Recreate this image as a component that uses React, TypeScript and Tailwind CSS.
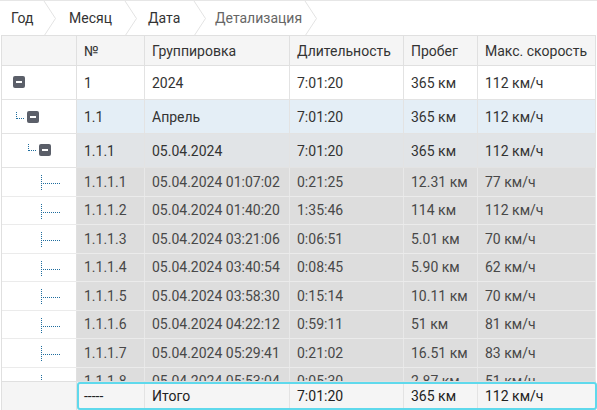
import React from "react";

type Row = { n: string; g: string; d: string; p: string; s: string };

const details: Row[] = [
  { n: "1.1.1.1", g: "05.04.2024 01:07:02", d: "0:21:25", p: "12.31 км", s: "77 км/ч" },
  { n: "1.1.1.2", g: "05.04.2024 01:40:20", d: "1:35:46", p: "114 км", s: "112 км/ч" },
  { n: "1.1.1.3", g: "05.04.2024 03:21:06", d: "0:06:51", p: "5.01 км", s: "70 км/ч" },
  { n: "1.1.1.4", g: "05.04.2024 03:40:54", d: "0:08:45", p: "5.90 км", s: "62 км/ч" },
  { n: "1.1.1.5", g: "05.04.2024 03:58:30", d: "0:15:14", p: "10.11 км", s: "70 км/ч" },
  { n: "1.1.1.6", g: "05.04.2024 04:22:12", d: "0:59:11", p: "51 км", s: "81 км/ч" },
  { n: "1.1.1.7", g: "05.04.2024 05:29:41", d: "0:21:02", p: "16.51 км", s: "83 км/ч" },
  { n: "1.1.1.8", g: "05.04.2024 05:53:04", d: "0:05:30", p: "2.87 км", s: "51 км/ч" },
];

const GRID = "grid grid-cols-[75px_68px_145px_114px_74px_118px]";

function Chevron() {
  return (
    <svg width="14" height="35" viewBox="0 0 14 35" className="shrink-0">
      <polyline points="1,0 12.5,17.5 1,35" fill="none" stroke="#e3e3e3" strokeWidth="1" />
    </svg>
  );
}

function MinusBox({ x, y }: { x: number; y: number }) {
  return (
    <g>
      <rect x={x} y={y} width="12" height="12" rx="2" fill="#5b5f69" />
      <rect x={x + 3} y={y + 5} width="6" height="2" fill="#ffffff" />
    </g>
  );
}

const DOT = "#1f6d9e";

function TreeTop({ level }: { level: number }) {
  return (
    <svg width="75" height="33" viewBox="0 0 75 33" className="block">
      {level === 0 && <MinusBox x={11} y={10} />}
      {level === 1 && (
        <>
          <line x1="14.5" y1="12" x2="14.5" y2="19" stroke={DOT} strokeDasharray="1 1" />
          <line x1="15" y1="18.5" x2="22" y2="18.5" stroke={DOT} strokeDasharray="1 1" />
          <MinusBox x={25} y={11} />
        </>
      )}
      {level === 2 && (
        <>
          <line x1="26.5" y1="10" x2="26.5" y2="17" stroke={DOT} strokeDasharray="1 1" />
          <line x1="27" y1="16.5" x2="34" y2="16.5" stroke={DOT} strokeDasharray="1 1" />
          <MinusBox x={37} y={10} />
        </>
      )}
    </svg>
  );
}

function TreeLeaf() {
  return (
    <svg width="75" height="27.5" viewBox="0 0 75 27.5" className="block">
      <line x1="39.5" y1="7" x2="39.5" y2="22" stroke={DOT} strokeDasharray="1 1" />
      <line x1="41" y1="15.5" x2="59" y2="15.5" stroke={DOT} strokeDasharray="1 1" />
    </svg>
  );
}

function TopRow({ r, level, bg }: { r: Row; level: number; bg: string }) {
  return (
    <div className={`${GRID} h-[34px] border-b border-[#e3e3e3] text-[#333]`}>
      <div className="border-r border-[#e0e0e0] bg-white">
        <TreeTop level={level} />
      </div>
      {[r.n, r.g, r.d, r.p, r.s].map((t, i) => (
        <div
          key={i}
          className={`flex items-center pl-[7px] border-r border-[#e3e3e3] whitespace-nowrap ${bg}`}
        >
          {t}
        </div>
      ))}
    </div>
  );
}

function DetailRow({ r }: { r: Row }) {
  return (
    <div className={`${GRID} h-[28.5px] border-b border-[#ebebeb] text-[#484848]`}>
      <div className="border-r border-[#e0e0e0] bg-white overflow-hidden">
        <TreeLeaf />
      </div>
      {[r.n, r.g, r.d, r.p, r.s].map((t, i) => (
        <div
          key={i}
          className="flex items-center pl-[7px] border-r border-[#e8e8e8] bg-[#dddddd] whitespace-nowrap overflow-hidden"
        >
          {t}
        </div>
      ))}
    </div>
  );
}

export default function App() {
  return (
    <div
      className="w-[597px] h-[410px] overflow-hidden bg-white text-[14px] leading-none"
      style={{ fontFamily: "Roboto, 'Noto Sans', sans-serif" }}
    >
      {/* breadcrumb */}
      <div className="flex h-[35px] items-center border-t border-[#e6e6e6]">
        <div className="flex h-full w-[43px] items-center pl-[11px] text-[#333]">Год</div>
        <Chevron />
        <div className="flex h-full w-[67px] items-center pl-[12px] text-[#333]">Месяц</div>
        <Chevron />
        <div className="flex h-full w-[55px] items-center pl-[10px] text-[#333]">Дата</div>
        <Chevron />
        <div className="flex h-full w-[97px] items-center pl-[8px] text-[#666] whitespace-nowrap">Детализация</div>
        <Chevron />
      </div>

      {/* table */}
      <div className="relative ml-[1px] w-[595px] border-l border-[#e0e0e0]">
        {/* header */}
        <div className={`${GRID} h-[31px] border-y border-[#e0e0e0] bg-[#f5f5f5] text-[#333]`}>
          <div className="border-r border-[#e0e0e0]" />
          {["№", "Группировка", "Длительность", "Пробег", "Макс. скорость"].map((t) => (
            <div key={t} className="flex items-center pl-[7px] border-r border-[#e0e0e0] whitespace-nowrap">
              {t}
            </div>
          ))}
        </div>

        {/* body */}
        <div className="h-[315px] overflow-hidden">
          <TopRow r={{ n: "1", g: "2024", d: "7:01:20", p: "365 км", s: "112 км/ч" }} level={0} bg="bg-white" />
          <TopRow r={{ n: "1.1", g: "Апрель", d: "7:01:20", p: "365 км", s: "112 км/ч" }} level={1} bg="bg-[#e4eef6]" />
          <TopRow r={{ n: "1.1.1", g: "05.04.2024", d: "7:01:20", p: "365 км", s: "112 км/ч" }} level={2} bg="bg-[#e1e4e7]" />
          {details.map((r) => (
            <DetailRow key={r.n} r={r} />
          ))}
        </div>

        {/* footer */}
        <div className={`${GRID} relative h-[29px] border-t border-[#e0e0e0] bg-[#f5f5f5] text-[#222]`}>
          <div className="border-r border-[#e0e0e0]" />
          {["-----", "Итого", "7:01:20", "365 км", "112 км/ч"].map((t, i) => (
            <div key={i} className="flex items-center pl-[7px] border-r border-[#e3e3e3]">
              {t}
            </div>
          ))}
          <div className="pointer-events-none absolute left-[75px] top-0 h-[28px] w-[520px] rounded-[3px] border-2 border-[#5fd9ec]" />
        </div>
      </div>
    </div>
  );
}
